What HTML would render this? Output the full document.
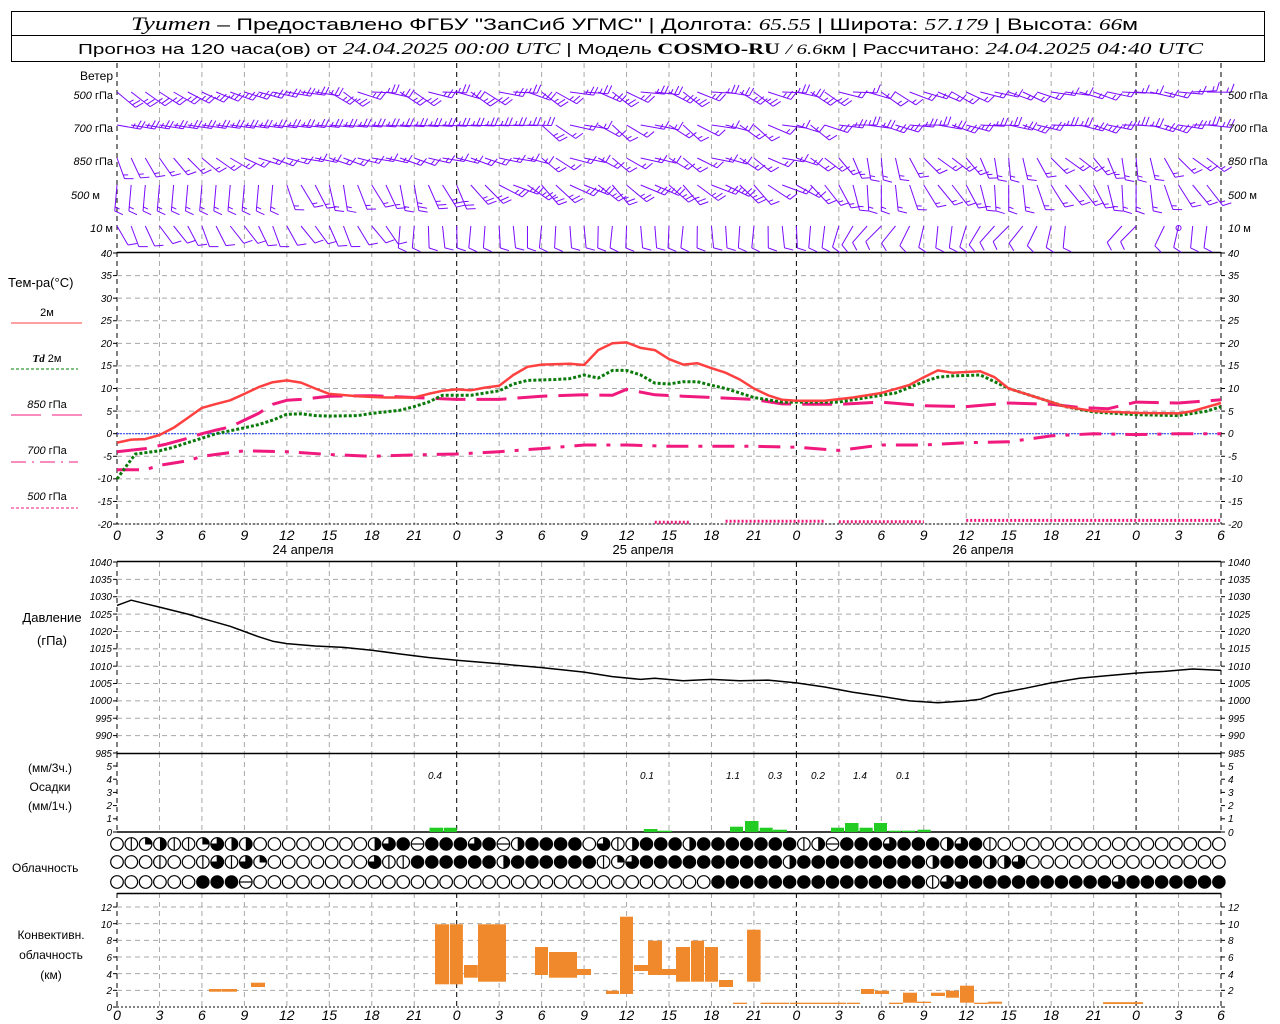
<!DOCTYPE html>
<html><head><meta charset="utf-8">
<style>
html,body{margin:0;padding:0;background:#fff;width:1280px;height:1024px;overflow:hidden}
svg{display:block}
text{font-family:"Liberation Sans","DejaVu Sans",sans-serif;fill:#000}
.it{font-family:"Liberation Sans",sans-serif;font-style:italic;font-size:10px}
.xl{font-family:"Liberation Sans",sans-serif;font-style:italic;font-size:14px}
.lb{font-size:12px}
.sr{font-family:"Liberation Serif",serif;font-style:italic}
</style></head><body>
<svg id="s" width="1280" height="1024" viewBox="0 0 1280 1024" xmlns="http://www.w3.org/2000/svg">
<rect x="11.5" y="11.5" width="1253" height="50" fill="none" stroke="#000"/>
<line x1="11" y1="35.5" x2="1265" y2="35.5" stroke="#000"/>
<text x="131" y="30" font-size="17" textLength="1007" lengthAdjust="spacingAndGlyphs"><tspan class="sr" font-size="19">Tyumen</tspan> – Предоставлено ФГБУ "ЗапСиб УГМС" | Долгота: <tspan class="sr">65.55</tspan> | Широта: <tspan class="sr">57.179</tspan> | Высота: <tspan class="sr">66</tspan>м</text>
<text x="78" y="54" font-size="15" textLength="1125" lengthAdjust="spacingAndGlyphs">Прогноз на 120 часа(ов) от <tspan class="sr" font-size="17">24.04.2025 00:00 UTC</tspan>  | Модель <tspan font-family="Liberation Serif" font-weight="bold" font-size="16">COSMO-RU</tspan> <tspan class="sr">/ 6.6</tspan>км | Рассчитано: <tspan class="sr" font-size="17">24.04.2025 04:40 UTC</tspan></text>

<g id="grid"></g>
<g id="data"></g>

<g class="lb" font-size="11">
<text x="113" y="80" text-anchor="end" font-size="12">Ветер</text>
<text x="113" y="99" text-anchor="end" font-size="11"><tspan font-style="italic">500</tspan> гПа</text>
<text x="113" y="132" text-anchor="end" font-size="11"><tspan font-style="italic">700</tspan> гПа</text>
<text x="113" y="165" text-anchor="end" font-size="11"><tspan font-style="italic">850</tspan> гПа</text>
<text x="100" y="199" text-anchor="end" font-size="11"><tspan font-style="italic">500</tspan> м</text>
<text x="113" y="232" text-anchor="end" font-size="11"><tspan font-style="italic">10</tspan>    м</text>
<text x="1228" y="99" font-size="11"><tspan font-style="italic">500</tspan> гПа</text>
<text x="1228" y="132" font-size="11"><tspan font-style="italic">700</tspan> гПа</text>
<text x="1228" y="165" font-size="11"><tspan font-style="italic">850</tspan> гПа</text>
<text x="1228" y="199" font-size="11"><tspan font-style="italic">500</tspan> м</text>
<text x="1228" y="232" font-size="11"><tspan font-style="italic">10</tspan>    м</text>
</g>

<text x="8" y="287" font-size="13">Тем-ра(°C)</text>
<text x="47" y="316" font-size="11" text-anchor="middle">2м</text>
<line x1="11" y1="323" x2="82" y2="323" stroke="#ff4040" stroke-width="1"/>
<text x="47" y="362" font-size="11" text-anchor="middle"><tspan class="sr" font-weight="bold" font-size="11">Td</tspan>   2м</text>
<line x1="11" y1="369" x2="78" y2="369" stroke="#008000" stroke-dasharray="3 2"/>
<text x="47" y="408" font-size="11" text-anchor="middle"><tspan font-style="italic">850</tspan> гПа</text>
<line x1="11" y1="415" x2="82" y2="415" stroke="#f0197d" stroke-dasharray="30 11"/>
<text x="47" y="454" font-size="11" text-anchor="middle"><tspan font-style="italic">700</tspan> гПа</text>
<line x1="11" y1="462" x2="78" y2="462" stroke="#f0197d" stroke-dasharray="15 6 2 6"/>
<text x="47" y="500" font-size="11" text-anchor="middle"><tspan font-style="italic">500</tspan> гПа</text>
<line x1="11" y1="508" x2="78" y2="508" stroke="#f0197d" stroke-dasharray="3 2"/>

<g class="it" text-anchor="end">
<text x="112" y="257">40</text><text x="112" y="279">35</text><text x="112" y="302">30</text><text x="112" y="324">25</text><text x="112" y="347">20</text><text x="112" y="369">15</text><text x="112" y="392">10</text><text x="112" y="415">5</text><text x="112" y="437">0</text><text x="112" y="460">-5</text><text x="112" y="482">-10</text><text x="112" y="505">-15</text><text x="112" y="528">-20</text>
</g>
<g class="it">
<text x="1228" y="257">40</text><text x="1228" y="279">35</text><text x="1228" y="302">30</text><text x="1228" y="324">25</text><text x="1228" y="347">20</text><text x="1228" y="369">15</text><text x="1228" y="392">10</text><text x="1228" y="415">5</text><text x="1228" y="437">0</text><text x="1228" y="460">-5</text><text x="1228" y="482">-10</text><text x="1228" y="505">-15</text><text x="1228" y="528">-20</text>
</g>
<g class="xl" text-anchor="middle">
<text x="117" y="540">0</text><text x="159.5" y="540">3</text><text x="201.9" y="540">6</text><text x="244.4" y="540">9</text><text x="286.8" y="540">12</text><text x="329.3" y="540">15</text><text x="371.8" y="540">18</text><text x="414.2" y="540">21</text><text x="456.7" y="540">0</text><text x="499.1" y="540">3</text><text x="541.6" y="540">6</text><text x="584.1" y="540">9</text><text x="626.5" y="540">12</text><text x="669" y="540">15</text><text x="711.4" y="540">18</text><text x="753.9" y="540">21</text><text x="796.4" y="540">0</text><text x="838.8" y="540">3</text><text x="881.3" y="540">6</text><text x="923.7" y="540">9</text><text x="966.2" y="540">12</text><text x="1008.7" y="540">15</text><text x="1051.1" y="540">18</text><text x="1093.6" y="540">21</text><text x="1136" y="540">0</text><text x="1178.5" y="540">3</text><text x="1221" y="540">6</text>
</g>
<text x="303" y="554" font-size="13" text-anchor="middle">24 апреля</text>
<text x="643" y="554" font-size="13" text-anchor="middle">25 апреля</text>
<text x="983" y="554" font-size="13" text-anchor="middle">26 апреля</text>

<text x="52" y="622" font-size="13" text-anchor="middle">Давление</text>
<text x="52" y="645" font-size="13" text-anchor="middle">(гПа)</text>
<g class="it" text-anchor="end" font-size="9">
<text x="112" y="566">1040</text><text x="112" y="583">1035</text><text x="112" y="600">1030</text><text x="112" y="618">1025</text><text x="112" y="635">1020</text><text x="112" y="652">1015</text><text x="112" y="670">1010</text><text x="112" y="687">1005</text><text x="112" y="704">1000</text><text x="112" y="722">995</text><text x="112" y="739">990</text><text x="112" y="757">985</text>
</g>
<g class="it" font-size="9">
<text x="1228" y="566">1040</text><text x="1228" y="583">1035</text><text x="1228" y="600">1030</text><text x="1228" y="618">1025</text><text x="1228" y="635">1020</text><text x="1228" y="652">1015</text><text x="1228" y="670">1010</text><text x="1228" y="687">1005</text><text x="1228" y="704">1000</text><text x="1228" y="722">995</text><text x="1228" y="739">990</text><text x="1228" y="757">985</text>
</g>

<text x="50" y="772" font-size="12" text-anchor="middle">(мм/3ч.)</text>
<text x="50" y="791" font-size="12" text-anchor="middle">Осадки</text>
<text x="50" y="810" font-size="12" text-anchor="middle">(мм/1ч.)</text>
<g class="it" text-anchor="end" font-size="10">
<text x="112" y="836">0</text><text x="112" y="822">1</text><text x="112" y="809">2</text><text x="112" y="796">3</text><text x="112" y="783">4</text><text x="112" y="770">5</text>
</g>
<g class="it" font-size="10">
<text x="1228" y="836">0</text><text x="1228" y="822">1</text><text x="1228" y="809">2</text><text x="1228" y="796">3</text><text x="1228" y="783">4</text><text x="1228" y="770">5</text>
</g>
<g class="it" font-size="13" text-anchor="middle">
<text x="435" y="779">0.4</text><text x="647" y="779">0.1</text><text x="733" y="779">1.1</text><text x="775" y="779">0.3</text><text x="818" y="779">0.2</text><text x="860" y="779">1.4</text><text x="903" y="779">0.1</text>
</g>

<text x="12" y="872" font-size="12">Облачность</text>

<text x="51" y="939" font-size="12" text-anchor="middle">Конвективн.</text>
<text x="51" y="959" font-size="12" text-anchor="middle">облачность</text>
<text x="51" y="979" font-size="12" text-anchor="middle">(км)</text>
<g class="it" text-anchor="end" font-size="10">
<text x="112" y="1011">0</text><text x="112" y="994">2</text><text x="112" y="978">4</text><text x="112" y="961">6</text><text x="112" y="944">8</text><text x="112" y="928">10</text><text x="112" y="911">12</text>
</g>
<g class="it" font-size="10">
<text x="1228" y="994">2</text><text x="1228" y="978">4</text><text x="1228" y="961">6</text><text x="1228" y="944">8</text><text x="1228" y="928">10</text><text x="1228" y="911">12</text>
</g>
<g class="xl" text-anchor="middle">
<text x="117" y="1020">0</text><text x="159.5" y="1020">3</text><text x="201.9" y="1020">6</text><text x="244.4" y="1020">9</text><text x="286.8" y="1020">12</text><text x="329.3" y="1020">15</text><text x="371.8" y="1020">18</text><text x="414.2" y="1020">21</text><text x="456.7" y="1020">0</text><text x="499.1" y="1020">3</text><text x="541.6" y="1020">6</text><text x="584.1" y="1020">9</text><text x="626.5" y="1020">12</text><text x="669" y="1020">15</text><text x="711.4" y="1020">18</text><text x="753.9" y="1020">21</text><text x="796.4" y="1020">0</text><text x="838.8" y="1020">3</text><text x="881.3" y="1020">6</text><text x="923.7" y="1020">9</text><text x="966.2" y="1020">12</text><text x="1008.7" y="1020">15</text><text x="1051.1" y="1020">18</text><text x="1093.6" y="1020">21</text><text x="1136" y="1020">0</text><text x="1178.5" y="1020">3</text><text x="1221" y="1020">6</text>
</g>
</svg>
<script>
(function(){
var NS="http://www.w3.org/2000/svg";
var G=document.getElementById("grid"),D=document.getElementById("data");
function el(p,t,a){var e=document.createElementNS(NS,t);for(var k in a)e.setAttribute(k,a[k]);p.appendChild(e);return e;}
function X(h){return 117+h*1104/78;}
function line(p,x1,y1,x2,y2,c,d,w){var a={x1:x1,y1:y1,x2:x2,y2:y2,stroke:c,"stroke-width":w||1};if(d)a["stroke-dasharray"]=d;el(p,"line",a);}
var panels=[[63,252],[252,524],[562,753],[753,832],[893,1007]];
for(var i=0;i<=26;i++){var x=X(i*3);var day=(i%8==0)||i==26;
 panels.forEach(function(pp){line(G,x,pp[0],x,pp[1],day?"#000":"#a8a8a8","5 4",1);});}
function TY(t){return 253+(40-t)*4.517;}
for(var t=35;t>=-20;t-=5)line(G,117,TY(t),1221,TY(t),"#a8a8a8","5 4");
function PY(p){return 562+(1040-p)*3.473;}
for(var p=1035;p>=990;p-=5)line(G,117,PY(p),1221,PY(p),"#a8a8a8","5 4");
function CY(k){return 1007-k*8.333;}
for(var k=2;k<=12;k+=2)line(G,117,CY(k),1221,CY(k),"#a8a8a8","5 4");
line(G,117,252.5,1221,252.5,"#000",null,1.5);
line(G,117,561.5,1221,561.5,"#000",null,1.5);
line(G,117,753.5,1221,753.5,"#000",null,1.5);
line(G,117,832,1221,832,"#000",null,1.5);
line(G,117,893.5,1221,893.5,"#000",null,1.5);
line(G,117,524,1221,524,"#000","2 2",1);
line(G,117,1007,1221,1007,"#000","2 2",1);
line(G,117,433.7,1221,433.7,"#2040ff","2 1",1);
[[253,524,4.517*5],[562,753,17.36],[766,832,13.2],[907,1007,16.67]].forEach(function(a){for(var y=a[0];y<=a[1]+0.1;y+=a[2]){line(G,113,y,117,y,"#000");line(G,1221,y,1225,y,"#000");}});

function path(pts,fx,fy,attrs){var d="";pts.forEach(function(q,i){d+=(i?"L":"M")+fx(q[0]).toFixed(1)+" "+fy(q[1]).toFixed(1);});attrs.d=d;attrs.fill="none";attrs["stroke-linejoin"]="round";el(D,"path",attrs);}
var T2=[[0,-2],[1,-1.3],[2,-1.2],[3,-0.3],[4,1.3],[5,3.5],[6,5.7],[7,6.6],[8,7.4],[9,8.8],[10,10.3],[11,11.4],[12,11.8],[13,11.3],[14,10],[15,8.8],[17,8.3],[19,8],[21,8],[22,8.8],[23,9.5],[24,9.8],[25,9.6],[26,10.2],[27,10.6],[28,13],[29,14.8],[30,15.3],[32,15.5],[33,15.2],[34,18.5],[35,20],[36,20.2],[37,19],[38,18.5],[39,16.5],[40,15.3],[41,15.6],[42,14.5],[43,13.5],[44,12],[45,10],[46,8.5],[47,7.5],[48,7.3],[50,7.3],[52,8],[54,9],[56,10.8],[57,12.5],[58,14],[59,13.5],[61,13.8],[62,12.5],[63,10],[65,8],[67,6],[69,5],[72,4.6],[75,4.5],[76,5],[78,6.8]];
var TD=[[0,-10],[0.7,-7],[1.3,-4.5],[2,-4.2],[3,-3.8],[4,-3],[5,-2],[6,-1],[7,0],[9,1.3],[10,2],[11,3],[12,4.3],[13,4.4],[14,4],[15,3.9],[17,4],[18,4.5],[20,5.2],[21,6],[22,7],[23,8.5],[24,8.5],[25,8.5],[26,9],[27,9.5],[28,11],[29,11.8],[31,12],[32,12.2],[33,13],[34,12.3],[35,14],[36,14],[37,13],[38,11.2],[39,11],[40,11.5],[41,11.5],[42,10.7],[43,10],[44,9],[45,8],[47,7],[49,7],[51,7],[53,8],[55,9],[57,11.5],[58,12.5],[59,12.8],[61,13],[62,11.5],[63,10],[65,8],[67,6],[69,4.8],[72,4.2],[75,4],[77,5],[78,6]];
var T85=[[0,-4],[2,-3.3],[3.5,-2.3],[5,-1],[6,0],[7,0.8],[8,1.5],[9,3],[10,4.5],[11,6.5],[12,7.4],[13,7.6],[15,8.3],[18,8.4],[21,8],[24,7.6],[27,7.6],[30,8.3],[33,8.6],[35,8.5],[36,9.8],[38,8.6],[40,8.3],[42,8],[45,7.6],[47,6.6],[49,6.5],[51,6.5],[54,7],[57,6.2],[60,6],[63,6.8],[66,6.5],[68,5.8],[70,5.5],[72,7],[75,6.8],[78,7.5]];
var T70=[[0,-8],[2,-8],[3,-7],[5,-6],[6,-5],[9,-3.8],[12,-4],[15,-4.6],[18,-5],[21,-4.7],[24,-4.5],[27,-4],[30,-3.3],[33,-2.5],[36,-2.5],[39,-2.8],[42,-2.8],[45,-2.8],[48,-3],[51,-3.7],[54,-2.5],[57,-2.5],[60,-2],[63,-1.8],[66,-0.5],[69,0],[72,-0.2],[75,0],[78,0]];
path(T70,X,TY,{stroke:"#f0197d","stroke-width":3,"stroke-dasharray":"22 10 4 10"});
path(T85,X,TY,{stroke:"#f0197d","stroke-width":3,"stroke-dasharray":"30 11"});
path(TD,X,TY,{stroke:"#0a7a0a","stroke-width":3,"stroke-dasharray":"3 2"});
path(T2,X,TY,{stroke:"#ff4040","stroke-width":2.5});
[[38,40.5,-19.6],[43,50,-19.4],[51,57,-19.5],[60,78,-19.2]].forEach(function(s){path([[s[0],s[2]],[s[1],s[2]]],X,TY,{stroke:"#f0197d","stroke-width":3,"stroke-dasharray":"2 2"});});
var PR=[[0,1027.5],[1,1029],[2,1028],[3,1027],[4,1026],[5,1025],[6,1023.8],[8,1021.5],[9,1020],[10,1018.5],[11,1017.2],[12,1016.5],[14,1015.8],[16,1015.4],[18,1014.6],[20,1013.5],[22,1012.5],[24,1011.7],[27,1010.7],[30,1009.6],[33,1008.3],[35,1007],[37,1006.2],[38,1006.5],[40,1005.8],[42,1006.2],[44,1005.8],[46,1006],[48,1005.2],[50,1004],[52,1002.5],[54,1001.3],[56,1000],[58,999.5],[60,1000],[61,1000.5],[62,1002],[64,1003.5],[66,1005.2],[68,1006.5],[70,1007.3],[72,1008],[74,1008.5],[76,1009.2],[78,1008.8]];
path(PR,X,PY,{stroke:"#000","stroke-width":1.5});
[[429.5,443,827.7],[443.7,456.8,827.7],[643.8,657.4,829],[658,671.6,830.7],[730,743,826.7],[745,758.5,821],[759.7,772.7,827.7],[773,787,829.7],[831,844,827.7],[845,858.5,823],[859.6,872.7,827.7],[874,887,823],[888.6,901,830.7],[902,915,830.7],[917.6,930.7,829.7]].forEach(function(b){el(D,"rect",{x:b[0],y:b[2],width:b[1]-b[0],height:832-b[2],fill:"#22cc22"});});
[[209,221.7,989,991.7],[222,237,989,991.7],[251,265,982.7,987],[435,449,924.3,984.3],[449.8,462.9,924.3,984.3],[464,477.8,965,977.7],[478,506,924.3,981.7],[535,548,947,975],[549,577,952,977.7],[577,591,969,975],[606,619,990.7,994],[620,633,916.7,994],[634,648,965,971],[648,662,940.7,975],[662,676,969,975],[676,690,947,981.7],[691,704,940.7,981.7],[705,718,947,981.7],[719,733,980,987],[733,747,1002.7,1004],[747,760.6,929.7,981.7],[760.6,789,1002.7,1004],[790,846,1002.7,1004],[847,860,1002.7,1004],[861,874,989,994],[875,889,990.7,994],[889,903,1002.7,1004],[903,917,992.7,1002.7],[917,931,1001.7,1003],[931,945,992.7,996],[946,959,990.7,997.7],[960,974,985.7,1002.7],[974,988,1002.7,1004],[988,1002,1001.7,1003.7],[1103,1143,1002.2,1004]].forEach(function(b){el(D,"rect",{x:b[0],y:b[2],width:b[1]-b[0],height:b[3]-b[2],fill:"#f0882c"});});
var R1="OIQHIIQTHHOOOOOOOOHTFEFFFTFE"+"HFFFFOTIHFFFHFFFFFFFIHEFFFTFFFHT"+"FI"+"OOOOOOOOOOOOOOOO";
var R2="OOOIOOITITQOOOOOOOTIIFFFFFFH"+"FFFFFFIQTFFFFFFFFFFHFFFFFFFFFHFF"+"FHHT"+"OOOOOOOOOOOOOO";
var R3="OOOOOOFFFEOOOOOOOOOOOOOOOOOO"+"OOOOOOOOOOOOOOFFFFFFFFFFFFFFFITT"+"FFFFFFFFFFTFFFFFFF";
function cloud(cx,cy,c){var r=6.3;
 if(c=="F"){el(D,"circle",{cx:cx,cy:cy,r:r,fill:"#000",stroke:"#000"});return;}
 el(D,"circle",{cx:cx,cy:cy,r:r,fill:"#fff",stroke:"#000","stroke-width":1.2});
 if(c=="I")line(D,cx,cy-r,cx,cy+r,"#000",null,1.2);
 if(c=="E")line(D,cx-r,cy,cx+r,cy,"#000",null,1.2);
 if(c=="H")el(D,"path",{d:"M"+cx+" "+(cy-r)+"A"+r+" "+r+" 0 0 1 "+cx+" "+(cy+r)+"Z",fill:"#000"});
 if(c=="Q")el(D,"path",{d:"M"+cx+" "+cy+"L"+cx+" "+(cy-r)+"A"+r+" "+r+" 0 0 1 "+(cx+r)+" "+cy+"Z",fill:"#000",stroke:"#000"});
 if(c=="T")el(D,"path",{d:"M"+cx+" "+cy+"L"+cx+" "+(cy-r)+"A"+r+" "+r+" 0 1 1 "+(cx-r)+" "+cy+"Z",fill:"#000",stroke:"#000"});
}
for(var k=0;k<78;k++){var cx=117+k*14.31;cloud(cx,844,R1[k]||"O");cloud(cx,862,R2[k]||"O");cloud(cx,882,R3[k]||"O");}
var WC="#7a0aff";
function barb(x,y,ang,n,L){var a=ang*Math.PI/180,ux=Math.cos(a),uy=Math.sin(a);
 var ex=x+L*ux,ey=y+L*uy;line(D,x,y,ex,ey,WC,null,1);
 var fa=a-70*Math.PI/180;var fx=Math.cos(fa),fy=Math.sin(fa);
 for(var i=0;i<n;i++){var px=ex-ux*i*4,py=ey-uy*i*4;var fl=(i==n-1&&n>1)?5:9;line(D,px,py,px+fx*fl,py+fy*fl,WC,null,1);}
}
function rowAng(r,h){
 var s=Math.sin(h*1.3),c=Math.cos(h*0.7);
 if(r==0){if(h<14)return 40-h*2.5;if(h<56)return 20+18*s;return 25-(h-56)*1+8*s;}
 if(r==1){if(h<30)return 10-h*0.3;if(h<50)return 25+18*s;return 10+10*s;}
 if(r==2){if(h<10)return 70-h*5;if(h<30)return 15+6*s;if(h<50)return 25+15*s;return 60+25*c;}
 if(r==3){if(h<12)return 95;if(h<25)return 70+12*s;if(h<50)return 35+15*s;return 70+20*c;}
 if(h<20)return 60+10*s;if(h<50)return 90+6*s;return 115+20*c;
}
var ry=[92,125,158,185,226],nf=[3,3,2,2,1],Ls=[24,24,22,26,22];
for(var r=0;r<5;r++){for(var h=0;h<78;h++){if(r==4&&(h==68||h==69||h==70||h==73))continue;
 var n=nf[r];if(r==0&&h>50)n=2;if(r==1&&h>30&&h<50)n=2;if(r==3&&h>20&&h<45)n=3;
 var a=rowAng(r,h);
 barb(X(h),ry[r],a,n,Ls[r]);}}
el(D,"circle",{cx:X(75),cy:228,r:2.5,fill:"none",stroke:WC});
})();
</script>
</body></html>
